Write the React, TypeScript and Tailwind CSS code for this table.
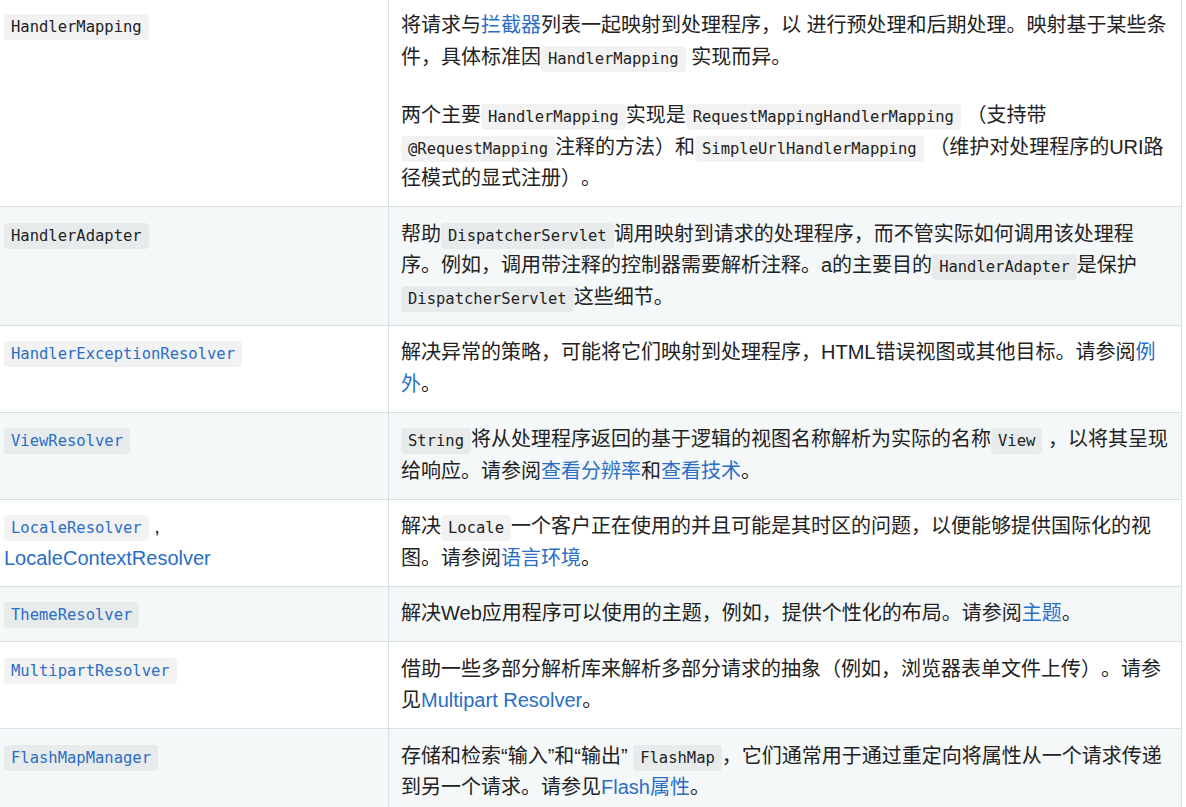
import type { ReactNode } from 'react'

// inline code chip
function C({ children, link }: { children: ReactNode; link?: boolean }) {
  return (
    <code
      className={
        'rounded-[4px] bg-black/5 px-[7px] py-1 text-[15.5px] leading-none font-["DejaVu_Sans_Mono",monospace] ' +
        (link ? 'text-[#2a6ec6]' : 'text-[#222]')
      }
    >
      {children}
    </code>
  )
}

function A({ children }: { children: ReactNode }) {
  return <a className="text-[#2a6ec6]">{children}</a>
}

interface Row {
  name: ReactNode
  desc: ReactNode
}

const rows: Row[] = [
  {
    name: <C>HandlerMapping</C>,
    desc: (
      <>
        <p>
          将请求与<A>拦截器</A>列表一起映射到处理程序，以 进行预处理和后期处理。映射基于某些条件，具体标准因<C>HandlerMapping</C> 实现而异。
        </p>
        <p className="mt-[27px]">
          两个主要<C>HandlerMapping</C>实现是<C>RequestMappingHandlerMapping</C> （支持带<C>@RequestMapping</C>注释的方法）和<C>SimpleUrlHandlerMapping</C> （维护对处理程序的URI路径模式的显式注册）。
        </p>
      </>
    ),
  },
  {
    name: <C>HandlerAdapter</C>,
    desc: (
      <p>
        帮助<C>DispatcherServlet</C>调用映射到请求的处理程序，而不管实际如何调用该处理程序。例如，调用带注释的控制器需要解析注释。a的主要目的<C>HandlerAdapter</C>是保护<C>DispatcherServlet</C>这些细节。
      </p>
    ),
  },
  {
    name: <C link>HandlerExceptionResolver</C>,
    desc: (
      <p>
        解决异常的策略，可能将它们映射到处理程序，HTML错误视图或其他目标。请参阅<A>例外</A>。
      </p>
    ),
  },
  {
    name: <C link>ViewResolver</C>,
    desc: (
      <p>
        <C>String</C>将从处理程序返回的基于逻辑的视图名称解析为实际的名称<C>View</C> ，以将其呈现给响应。请参阅<A>查看分辨率</A>和<A>查看技术</A>。
      </p>
    ),
  },
  {
    name: (
      <>
        <C link>LocaleResolver</C> ,<br />
        <A>LocaleContextResolver</A>
      </>
    ),
    desc: (
      <p>
        解决<C>Locale</C>一个客户正在使用的并且可能是其时区的问题，以便能够提供国际化的视图。请参阅<A>语言环境</A>。
      </p>
    ),
  },
  {
    name: <C link>ThemeResolver</C>,
    desc: <p>解决Web应用程序可以使用的主题，例如，提供个性化的布局。请参阅<A>主题</A>。</p>,
  },
  {
    name: <C link>MultipartResolver</C>,
    desc: (
      <p>
        借助一些多部分解析库来解析多部分请求的抽象（例如，浏览器表单文件上传）。请参见<A>Multipart Resolver</A>。
      </p>
    ),
  },
  {
    name: <C link>FlashMapManager</C>,
    desc: (
      <p>
        存储和检索“输入”和“输出” <C>FlashMap</C>，它们通常用于通过重定向将属性从一个请求传递到另一个请求。请参见<A>Flash属性</A>。
      </p>
    ),
  },
]

export default function App() {
  return (
    <div className='h-[807px] overflow-hidden bg-white text-[20px] leading-[31.5px] text-[#222] [text-spacing-trim:space-all] font-["Liberation_Sans","Noto_Sans_CJK_SC",sans-serif]'>
      <table className="-mt-[1.5px] w-[1182px] table-fixed border-separate border-spacing-0">
        <colgroup>
          <col className="w-[389px]" />
          <col />
        </colgroup>
        <tbody>
          {rows.map((row, i) => (
            <tr key={i} className={i % 2 === 1 ? 'bg-[#f5f8f9]' : 'bg-white'}>
              <td className="border-r border-b border-[#d5e1e3] py-[11.5px] pr-3 pl-[4px] align-top">{row.name}</td>
              <td className="border-r border-b border-[#d5e1e3] py-[11.5px] pr-3 pl-3 align-top">{row.desc}</td>
            </tr>
          ))}
        </tbody>
      </table>
    </div>
  )
}
